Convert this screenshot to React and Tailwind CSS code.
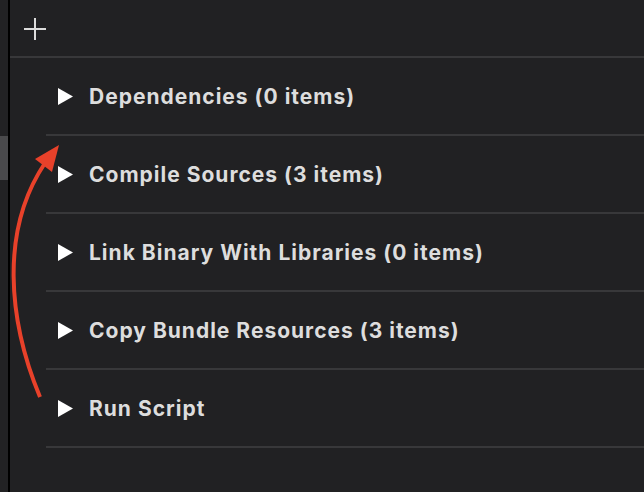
import React from "react";

const rows = [
  "Dependencies (0 items)",
  "Compile Sources (3 items)",
  "Link Binary With Libraries (0 items)",
  "Copy Bundle Resources (3 items)",
  "Run Script",
];

export default function App() {
  return (
    <div
      className="relative flex w-[644px] h-[492px] overflow-hidden bg-[#212123]"
      style={{ fontFamily: "Inter, 'Liberation Sans', sans-serif" }}
    >
      <div className="w-[8px] shrink-0 bg-[#222224] flex flex-col">
        <div className="h-[136px]" />
        <div className="h-[44px] bg-[#4a4a4c]" />
      </div>
      <div className="w-[2px] shrink-0 bg-black" />
      <div className="flex-1 flex flex-col">
        <div className="h-[56px] flex items-start pl-[14px] pt-[18px]">
          <svg width="22" height="22" viewBox="0 0 22 22">
            <path d="M11 0V22M0 11H22" stroke="#dcdcdc" strokeWidth="2" />
          </svg>
        </div>
        <div className="h-[2px] bg-[#38383a]" />
        <div className="flex flex-col pl-[36px]">
          {rows.map((r) => (
            <div key={r} className="flex flex-col">
              <div className="h-[76px] flex items-center pl-[12px] gap-[16px]">
                <svg width="15" height="17" viewBox="0 0 15 17">
                  <path d="M0 0L15 8.5L0 17Z" fill="#ffffff" />
                </svg>
                <span className="text-[21px] font-bold text-[#dddddd] tracking-[1px] pt-[1px]">{r}</span>
              </div>
              <div className="h-[2px] bg-[#38383a]" />
            </div>
          ))}
        </div>
      </div>
      <svg className="absolute left-0 top-0 pointer-events-none" width="644" height="492">
        <path d="M40 397 C8 320, 0 230, 45 163" stroke="#e8412a" strokeWidth="4" fill="none" />
        <polygon points="59,145 35,159 52,172" fill="#e8412a" />
      </svg>
    </div>
  );
}
